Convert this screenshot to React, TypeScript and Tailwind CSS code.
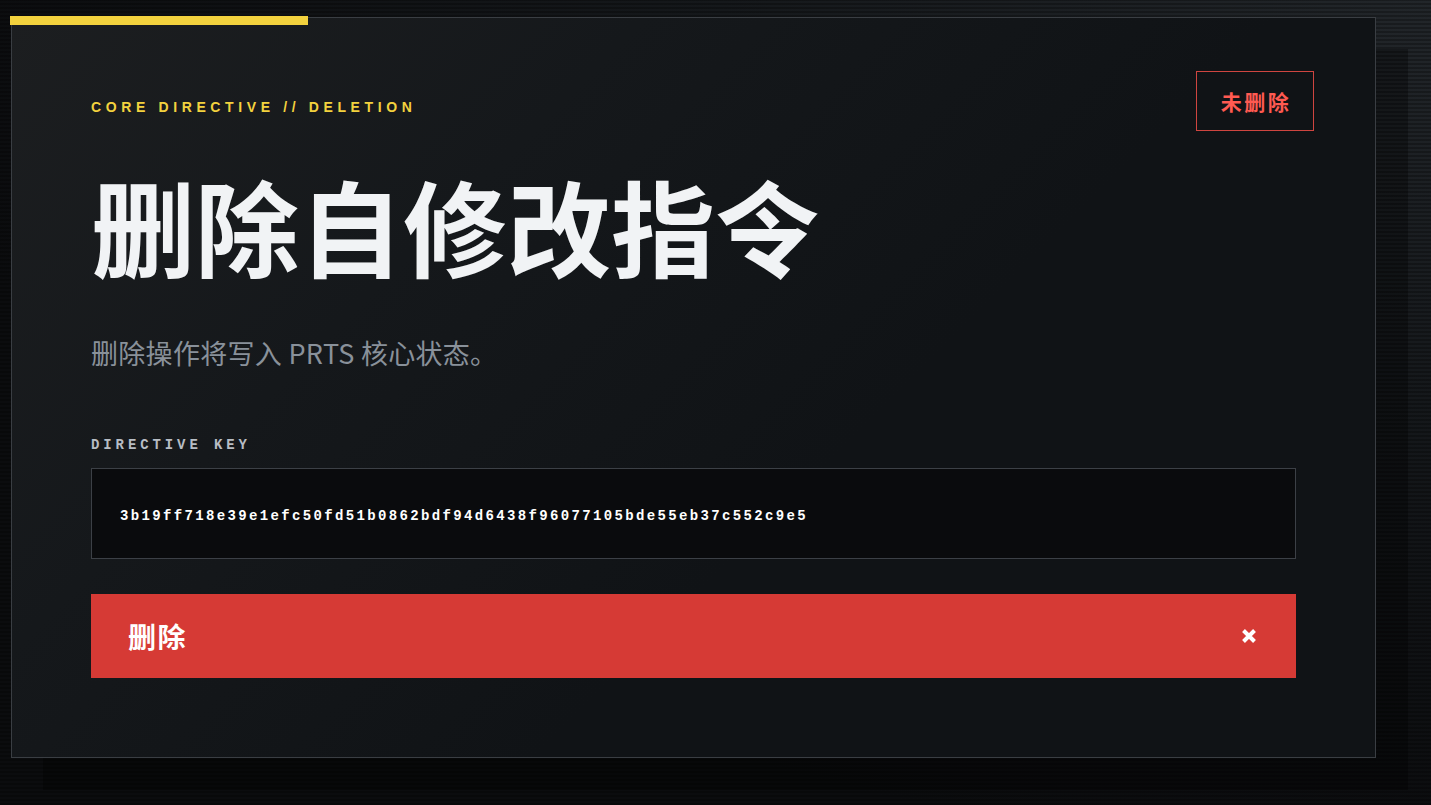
import React from 'react'

const directiveKey = "3b19ff718e39e1efc50fd51b0862bdf94d6438f96077105bde55eb37c552c9e5"

const CrossIcon = () => (
  <svg width="16" height="16" viewBox="0 0 16 16" aria-hidden="true">
    <path d="M2.5 2.5 L13.5 13.5 M13.5 2.5 L2.5 13.5" stroke="#ffffff" strokeWidth="4" strokeLinecap="butt" />
  </svg>
)

const App = () => {
  return (
    <div className="min-h-screen w-full overflow-hidden bg-[#0c0e10] bg-[radial-gradient(ellipse_at_top_right,#22262a_0%,#15181b_35%,#0b0c0e_75%)]">
      <div className="min-h-screen w-full bg-[repeating-linear-gradient(0deg,rgba(0,0,0,0.28)_0px,rgba(0,0,0,0.28)_2px,transparent_2px,transparent_4px)] pl-[11px] pt-[17px] pb-[40px]">
        <section className="relative w-[1365px] border border-[#3a3e43] bg-[linear-gradient(135deg,#1c1e20_0%,#15181b_30%,#101316_60%,#101316_100%)] px-[79px] pt-20 pb-[79px] shadow-[32px_32px_0_rgba(0,0,0,0.32)]">
          <div className="absolute -left-[2px] -top-[2px] h-[9px] w-[298px] bg-[#f3d23e]" />

          <div className="absolute right-[61px] top-[53px] flex h-[60px] w-[118px] items-center justify-center border border-[#cf4540] pl-[2px] font-['Noto_Sans_CJK_SC',sans-serif] text-[21px] font-bold leading-none tracking-[0.12em] text-[#ff5a51]">
            未删除
          </div>

          <p className="-mt-px font-['Liberation_Sans',Arial,sans-serif] text-[14px] font-bold leading-5 tracking-[4.62px] text-[#f3d23e]">
            CORE DIRECTIVE // DELETION
          </p>

          <h1 className="mt-[56px] font-['Noto_Sans_CJK_SC',sans-serif] text-[104px] font-bold leading-[104px] text-[#f1f3f5]">
            删除自修改指令
          </h1>

          <p className="mt-14 font-['Noto_Sans_CJK_SC',sans-serif] text-[27px] leading-[39px] tracking-[0.3px] text-[#89919a]">
            删除操作将写入 PRTS 核心状态。
          </p>

          <p className="mt-[63px] font-['Liberation_Mono',monospace] text-[14px] font-bold leading-5 tracking-[3.9px] text-[#b8bdc4]">
            DIRECTIVE KEY
          </p>

          <div className="mt-[13px] flex h-[91px] items-center border border-[#3c4046] bg-[#0a0b0d] px-7 pt-[5px]">
            <span className="font-['Liberation_Mono',monospace] text-[14px] font-bold tracking-[2.35px] text-white">
              {directiveKey}
            </span>
          </div>

          <button className="mt-[35px] flex h-[84px] w-full items-center justify-between bg-[#d63a35] pl-[37px] pr-[39px]">
            <span className="font-['Noto_Sans_CJK_SC',sans-serif] text-[28px] font-bold leading-none tracking-[0.05em] text-white">
              删除
            </span>
            <CrossIcon />
          </button>
        </section>
      </div>
    </div>
  )
}

export default App
